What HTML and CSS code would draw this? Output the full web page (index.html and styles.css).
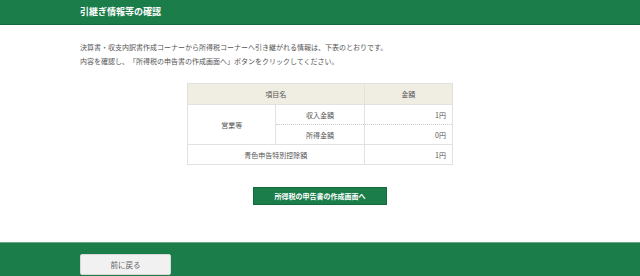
FILE: index.html
```html
<!DOCTYPE html>
<html lang="ja">
<head>
    <meta charset="UTF-8">
    <meta name="viewport" content="width=device-width, initial-scale=1.0">
    <title>引継ぎ情報等の確認</title>
    <link rel="stylesheet" href="styles.css">
</head>
<body>
    <header class="page-header">
        <div class="inner">
            <h1>引継ぎ情報等の確認</h1>
        </div>
    </header>

    <main class="inner content">
        <p class="lead">
            決算書・収支内訳書作成コーナーから所得税コーナーへ引き継がれる情報は、下表のとおりです。<br>
            内容を確認し、「所得税の申告書の作成画面へ」ボタンをクリックしてください。
        </p>

        <table class="carry-table">
            <thead>
                <tr>
                    <th colspan="2">項目名</th>
                    <th class="col-amount">金額</th>
                </tr>
            </thead>
            <tbody>
                <tr class="row-top">
                    <td rowspan="2" class="col-group">営業等</td>
                    <td class="col-item">収入金額</td>
                    <td class="num">1円</td>
                </tr>
                <tr class="row-sub">
                    <td class="col-item">所得金額</td>
                    <td class="num">0円</td>
                </tr>
                <tr>
                    <td colspan="2">青色申告特別控除額</td>
                    <td class="num">1円</td>
                </tr>
            </tbody>
        </table>

        <div class="action">
            <button class="btn-primary">所得税の申告書の作成画面へ</button>
        </div>
    </main>

    <footer class="page-footer">
        <div class="inner">
            <button class="btn-back">前に戻る</button>
        </div>
    </footer>
</body>
</html>
```

FILE: styles.css
```css
body {
    margin: 0;
    padding: 0;
    font-family: "Noto Sans CJK JP", "Noto Sans", sans-serif;
    color: #555;
    background-color: #fff;
    text-spacing-trim: space-all;
}
.inner {
    width: 480px;
    margin: 0 auto;
}
.page-header {
    height: 24px;
    background-color: #1b7d4a;
    border-bottom: 1px solid #136a3c;
}
.page-header h1 {
    margin: 0;
    font-size: 9px;
    line-height: 24px;
    font-weight: bold;
    color: #fff;
}
.content {
    padding-top: 15px;
    height: 202px;
}
.lead {
    margin: 0;
    font-size: 7px;
    line-height: 14px;
}
.carry-table {
    width: 266px;
    margin: 15px auto 0;
    border-collapse: collapse;
    font-size: 7px;
    color: #555;
}
.carry-table th,
.carry-table td {
    border: 1px solid #e2e2e2;
    height: 19px;
    padding: 0 6px;
    text-align: center;
    font-weight: normal;
}
.carry-table th {
    background-color: #f0ede3;
    height: 20px;
}
.carry-table .col-group {
    width: 76px;
}
.carry-table .col-item {
    width: 76px;
}
.carry-table .col-amount {
    width: 76px;
}
.carry-table .num {
    text-align: right;
}
.carry-table .row-top .col-item,
.carry-table .row-top .num {
    border-bottom: 1px dotted #ccc;
}
.carry-table .row-sub td {
    border-top: 1px dotted #ccc;
}
.action {
    margin-top: 15px;
    text-align: center;
}
.btn-primary {
    width: 134px;
    height: 18px;
    padding: 0;
    font-family: inherit;
    font-size: 7px;
    font-weight: bold;
    color: #fff;
    background-color: #1b7d4a;
    border: 1px solid #156a3d;
    cursor: pointer;
}
.page-footer {
    height: 33px;
    background-color: #1b7d4a;
    border-top: 1px solid #6ea585;
}
.page-footer .inner {
    padding-top: 6px;
}
.btn-back {
    width: 91px;
    height: 21px;
    padding: 0;
    font-family: inherit;
    font-size: 7.5px;
    color: #666;
    background-color: #f1f1f1;
    border: 1px solid #d8d8d8;
    border-radius: 2px;
    cursor: pointer;
}
```
